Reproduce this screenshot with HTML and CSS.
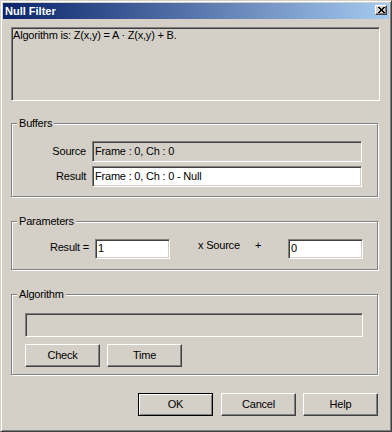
FILE: index.html
```html
<!DOCTYPE html>
<html>
<head>
<meta charset="utf-8">
<title>Null Filter</title>
<link rel="stylesheet" href="styles.css">
</head>
<body>
<div class="window">
  <div class="titlebar">
    <span class="title">Null Filter</span>
    <span class="close">
      <svg width="7" height="6" viewBox="0 0 7 6" shape-rendering="crispEdges">
        <path d="M0 0h2v1h-2zM5 0h2v1h-2zM1 1h2v1h-2zM4 1h2v1h-2zM2 2h3v2h-3zM1 4h2v1h-2zM4 4h2v1h-2zM0 5h2v1h-2zM5 5h2v1h-2z" fill="#000"/>
      </svg>
    </span>
  </div>
  <div class="client">
    <div class="info">Algorithm is: Z(x,y) = A · Z(x,y) + B.</div>

    <div class="group buffers">
      <div class="gtitle">Buffers</div>
      <div class="brow first">
        <span class="blabel">Source</span>
        <div class="field ro wide">Frame : 0, Ch : 0</div>
      </div>
      <div class="brow second">
        <span class="blabel">Result</span>
        <div class="field wide">Frame : 0, Ch : 0 - Null</div>
      </div>
    </div>

    <div class="group params">
      <div class="gtitle">Parameters</div>
      <div class="prow">
        <span class="plabel">Result =</span>
        <div class="field small first-field">1</div>
        <span class="xsrc">x Source</span>
        <span class="plus">+</span>
        <div class="field small">0</div>
      </div>
    </div>

    <div class="group algo">
      <div class="gtitle">Algorithm</div>
      <div class="field ro algofield"></div>
      <div class="algobtns">
        <button type="button" class="btn">Check</button>
        <button type="button" class="btn">Time</button>
      </div>
    </div>

    <div class="dlgbtns">
      <button type="button" class="btn default">OK</button>
      <button type="button" class="btn cancel">Cancel</button>
      <button type="button" class="btn">Help</button>
    </div>
  </div>
</div>
</body>
</html>
```
FILE: styles.css
```css
html, body {
  margin: 0;
  padding: 0;
  background: #d4d0c8;
}

body {
  font-family: "Liberation Sans", Arial, sans-serif;
  font-size: 11px;
  line-height: 13px;
  letter-spacing: -0.2px;
  color: #000;
}

.window {
  width: 392px;
  height: 432px;
  box-sizing: border-box;
  background: #d4d0c8;
  border: 1px solid;
  border-color: #d4d0c8 #404040 #404040 #d4d0c8;
  box-shadow: inset 1px 1px 0 #fff, inset -1px -1px 0 #808080;
  padding: 2px;
  display: flex;
  flex-direction: column;
}

.titlebar {
  height: 16px;
  flex: none;
  display: flex;
  align-items: flex-start;
  background: linear-gradient(to right, #0a246a, #a6caf0);
}

.title {
  padding-left: 2px;
  color: #fff;
  font-weight: bold;
  letter-spacing: 0;
  line-height: 16px;
}

.close {
  width: 12px;
  height: 10px;
  margin: 2px 2px 0 auto;
  box-sizing: border-box;
  border: 1px solid;
  border-color: #fff #404040 #404040 #fff;
  box-shadow: inset -1px -1px 0 #808080;
  background: #d4d0c8;
  display: flex;
  align-items: center;
  justify-content: center;
}

.close svg {
  display: block;
}

.client {
  flex: 1;
  display: flex;
  flex-direction: column;
  align-items: flex-start;
  padding: 8px 0 0 8px;
}

.info {
  width: 369px;
  height: 74px;
  box-sizing: border-box;
  border: 1px solid;
  border-color: #808080 #fff #fff #808080;
  box-shadow: inset 1px 1px 0 #404040, inset -1px -1px 0 #d4d0c8;
  padding: 1px;
  white-space: nowrap;
}

.group {
  width: 367px;
  box-sizing: border-box;
  border: 1px solid #808080;
  box-shadow: 1px 1px 0 #fff, inset 1px 1px 0 #fff;
}

.gtitle {
  width: max-content;
  margin: -7px 0 0 5px;
  padding: 0 2px;
  line-height: 13px;
  background: #d4d0c8;
}

.field {
  box-sizing: border-box;
  height: 21px;
  border: 1px solid;
  border-color: #808080 #fff #fff #808080;
  box-shadow: inset 1px 1px 0 #404040, inset -1px -1px 0 #d4d0c8;
  background: #fff;
  padding: 3px 0 0 2px;
  white-space: nowrap;
  overflow: hidden;
}

.field.ro {
  background: #d4d0c8;
}

/* Buffers */
.buffers {
  margin-top: 22px;
  padding-bottom: 9px;
}

.brow {
  display: grid;
  grid-template-columns: 74px 270px;
  column-gap: 6px;
  align-items: start;
}

.brow.first {
  margin-top: 11px;
}

.brow.second {
  margin-top: 4px;
}

.blabel {
  text-align: right;
  margin-top: 4px;
}

/* Parameters */
.params {
  margin-top: 24px;
  padding-bottom: 10px;
}

.prow {
  display: flex;
  align-items: flex-start;
  margin-top: 11px;
}

.plabel {
  width: 77px;
  text-align: right;
  margin-top: 2px;
}

.field.small {
  width: 75px;
  height: 20px;
  padding-top: 2px;
}

.first-field {
  margin-left: 6px;
}

.xsrc {
  width: 57px;
  margin-left: 28px;
}

.plus {
  width: 33px;
}

/* Algorithm */
.algo {
  margin-top: 24px;
  padding-bottom: 7px;
}

.algofield {
  width: 338px;
  height: 24px;
  margin: 12px 0 0 13px;
}

.algobtns {
  display: flex;
  gap: 7px;
  margin: 7px 0 0 13px;
}

/* Buttons */
.btn {
  width: 75px;
  height: 23px;
  box-sizing: border-box;
  margin: 0;
  padding: 0;
  border: 1px solid;
  border-color: #fff #404040 #404040 #fff;
  border-radius: 0;
  box-shadow: inset -1px -1px 0 #808080;
  background: #d4d0c8;
  font: inherit;
  letter-spacing: inherit;
  color: #000;
  display: flex;
  align-items: center;
  justify-content: center;
}

.btn.default {
  border-color: #000;
  box-shadow: inset 1px 1px 0 #fff, inset -1px -1px 0 #808080;
}

.dlgbtns {
  width: 367px;
  display: flex;
  justify-content: flex-end;
  gap: 8px;
  margin-top: 18px;
}

.dlgbtns .cancel {
  margin-right: -1px;
}
```
